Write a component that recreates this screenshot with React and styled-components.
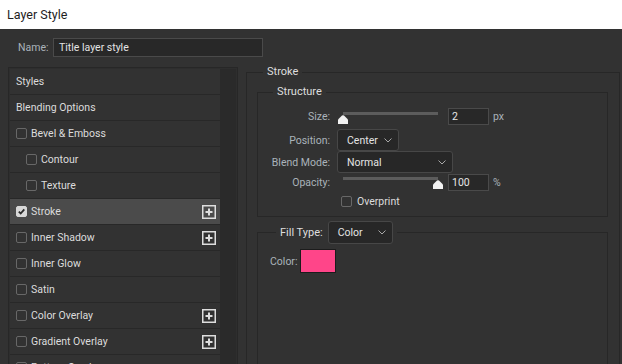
import styled, { createGlobalStyle } from 'styled-components';

const GlobalStyle = createGlobalStyle`
  html, body {
    margin: 0;
    height: 100%;
    overflow: hidden;
  }
  body {
    font-family: Roboto, "Liberation Sans", sans-serif;
    font-size: 10.5px;
    background: #323232;
  }
  #root {
    height: 100%;
  }
`;

const EFFECTS = [
  { label: 'Styles' },
  { label: 'Blending Options' },
  { label: 'Bevel & Emboss', check: true },
  { label: 'Contour', check: true, indent: true },
  { label: 'Texture', check: true, indent: true },
  { label: 'Stroke', check: true, checked: true, selected: true, plus: true },
  { label: 'Inner Shadow', check: true, plus: true },
  { label: 'Inner Glow', check: true },
  { label: 'Satin', check: true },
  { label: 'Color Overlay', check: true, plus: true },
  { label: 'Gradient Overlay', check: true, plus: true },
  { label: 'Pattern Overlay', check: true },
  { label: 'Outer Glow', check: true },
];

function App() {
  return (
    <Window>
      <GlobalStyle />
      <TitleBar>Layer Style</TitleBar>
      <Body>
        <NameRow>
          <NameLabel>Name:</NameLabel>
          <NameInput>Title layer style</NameInput>
        </NameRow>
        <Main>
          <EffectsPanel>
            <EffectsList>
              {EFFECTS.map((item) => (
                <EffectRow key={item.label} selected={item.selected} indent={item.indent}>
                  {item.check && <CheckBox checked={item.checked} />}
                  <EffectLabel>{item.label}</EffectLabel>
                  {item.plus && <PlusIcon />}
                </EffectRow>
              ))}
            </EffectsList>
            <Scrollbar />
          </EffectsPanel>

          <Group>
            <GroupLegend offset={6}>Stroke</GroupLegend>
            <SubGroup>
              <GroupLegend offset={15}>Structure</GroupLegend>
              <ControlRow height={17}>
                <RowLabel>Size:</RowLabel>
                <Slider value={0} />
                <NumberBox>2</NumberBox>
                <Unit>px</Unit>
              </ControlRow>
              <ControlRow height={22} gap={4}>
                <RowLabel>Position:</RowLabel>
                <Dropdown width={62}>Center</Dropdown>
              </ControlRow>
              <ControlRow height={22}>
                <RowLabel>Blend Mode:</RowLabel>
                <Dropdown width={116}>Normal</Dropdown>
              </ControlRow>
              <ControlRow height={18}>
                <RowLabel>Opacity:</RowLabel>
                <Slider value={1} />
                <NumberBox>100</NumberBox>
                <Unit>%</Unit>
              </ControlRow>
              <ControlRow height={14} gap={3}>
                <RowLabel />
                <CheckOption>
                  <CheckBox />
                  <OptionText>Overprint</OptionText>
                </CheckOption>
              </ControlRow>
            </SubGroup>

            <FillGroup>
              <FillLegend>
                <LegendText>Fill Type:</LegendText>
                <Dropdown width={65} height={23}>Color</Dropdown>
              </FillLegend>
              <ColorRow>
                <FieldLabel>Color:</FieldLabel>
                <Swatch color="#ff4589" />
              </ColorRow>
            </FillGroup>
          </Group>
        </Main>
      </Body>
    </Window>
  );
}

function CheckBox({ checked }) {
  return (
    <Box checked={checked}>
      {checked && (
        <svg width="9" height="9" viewBox="0 0 9 9">
          <path d="M1.8 4.6 L3.7 6.5 L7.3 2.4" fill="none" stroke="#2b2b2b" strokeWidth="1.8" />
        </svg>
      )}
    </Box>
  );
}

function PlusIcon() {
  return (
    <PlusWrap>
      <svg width="14" height="14" viewBox="0 0 14 14">
        <rect x="0.75" y="0.75" width="12.5" height="12.5" fill="none" stroke="#dedede" strokeWidth="1.5" />
        <path d="M7 3.5 V10.5 M3.5 7 H10.5" stroke="#dedede" strokeWidth="2" />
      </svg>
    </PlusWrap>
  );
}

function Slider({ value }) {
  return (
    <SliderWrap>
      <Track />
      <Thumb style={{ left: `${1 + value * 95}px` }}>
        <svg width="10" height="9" viewBox="0 0 10 9">
          <path d="M4 0.6 Q5 -0.2 6 0.6 L10 4.6 V9 H0 V4.6 Z" fill="#f2f2f2" />
        </svg>
      </Thumb>
    </SliderWrap>
  );
}

function Dropdown({ width, height = 22, children }) {
  return (
    <SelectBox width={width} height={height}>
      <span>{children}</span>
      <svg width="8" height="5" viewBox="0 0 8 5">
        <path d="M0.5 0.5 L4 4 L7.5 0.5" fill="none" stroke="#a8a8a8" strokeWidth="1" />
      </svg>
    </SelectBox>
  );
}

const Window = styled.div`
  display: flex;
  flex-direction: column;
  height: 100vh;
  overflow: hidden;
`;

const TitleBar = styled.div`
  flex: none;
  height: 29px;
  display: flex;
  align-items: center;
  padding-left: 7px;
  background: #ffffff;
  color: #1e1e1e;
  font-size: 12.5px;
`;

const Body = styled.div`
  flex: 1;
  min-height: 0;
  display: flex;
  flex-direction: column;
  padding: 9px 2px 0 8px;
  background: #323232;
  overflow: hidden;
`;

const NameRow = styled.div`
  display: flex;
  align-items: center;
  gap: 5px;
  padding-left: 10px;
  height: 19px;
`;

const FieldLabel = styled.span`
  color: #aab2ba;
`;

const NameLabel = styled(FieldLabel)`
  width: 30px;
`;

const NameInput = styled.div`
  box-sizing: border-box;
  width: 210px;
  height: 19px;
  display: flex;
  align-items: center;
  padding-left: 5px;
  background: #282828;
  border: 1px solid #4a4a4a;
  color: #e4e4e4;
`;

const Main = styled.div`
  flex: 1;
  min-height: 0;
  display: flex;
  align-items: flex-start;
  gap: 8px;
  margin-top: 8px;
`;

const EffectsPanel = styled.div`
  flex: none;
  box-sizing: border-box;
  width: 230px;
  margin-top: 2px;
  padding: 1px;
  height: 320px;
  display: flex;
  border: 1px solid #272727;
  background: #2e2e2e;
`;

const EffectsList = styled.div`
  width: 210px;
  display: flex;
  flex-direction: column;
`;

const EffectRow = styled.div`
  flex: none;
  box-sizing: border-box;
  height: 26px;
  display: flex;
  align-items: center;
  gap: 4px;
  padding-left: ${({ indent }) => (indent ? 16 : 6)}px;
  border-bottom: 1px solid #282828;
  background: ${({ selected }) => (selected ? '#4b4b4b' : '#323232')};
  color: #dcdcdc;
`;

const EffectLabel = styled.span`
  flex: 1;
`;

const PlusWrap = styled.span`
  display: flex;
  margin-right: 4px;
`;

const Scrollbar = styled.div`
  width: 16px;
  background: #2a2a2a;
`;

const Box = styled.span`
  flex: none;
  box-sizing: border-box;
  width: 11px;
  height: 11px;
  display: flex;
  align-items: center;
  justify-content: center;
  border-radius: 2px;
  border: 1px solid ${({ checked }) => (checked ? '#d8d8d8' : '#686868')};
  background: ${({ checked }) => (checked ? '#d8d8d8' : 'transparent')};
`;

const Group = styled.fieldset`
  flex: 1;
  min-width: 0;
  margin: 0;
  padding: 6px 11px 0 10px;
  border: 1px solid #272727;
  height: 400px;
`;

const GroupLegend = styled.legend`
  margin-left: ${({ offset }) => offset}px;
  padding: 0 4px;
  height: 14px;
  line-height: 14px;
  font-size: 11px;
  color: #dedede;
`;

const SubGroup = styled.fieldset`
  margin: 0;
  min-width: 0;
  padding: 9px 0 8px 0;
  border: 1px solid #272727;
  display: flex;
  flex-direction: column;
`;

const ControlRow = styled.div`
  display: flex;
  align-items: center;
  height: ${({ height }) => height}px;
  margin-top: ${({ gap = 0 }) => gap}px;
`;

const RowLabel = styled.span`
  flex: none;
  width: 72px;
  margin-right: 7px;
  text-align: right;
  color: #aab2ba;
`;

const SliderWrap = styled.div`
  position: relative;
  align-self: flex-start;
  width: 106px;
  height: 16px;
  margin-right: 5px;
`;

const Track = styled.div`
  position: absolute;
  top: 4px;
  left: 6px;
  width: 95px;
  height: 3px;
  background: #5c5c5c;
`;

const Thumb = styled.div`
  position: absolute;
  top: 7px;
  display: flex;
`;

const NumberBox = styled.div`
  box-sizing: border-box;
  width: 41px;
  height: 17px;
  display: flex;
  align-items: center;
  padding-left: 3px;
  background: #282828;
  border: 1px solid #4a4a4a;
  color: #e6e6e6;
`;

const Unit = styled.span`
  margin-left: 4px;
  color: #aab2ba;
`;

const SelectBox = styled.div`
  box-sizing: border-box;
  width: ${({ width }) => width}px;
  height: ${({ height }) => height}px;
  display: flex;
  align-items: center;
  justify-content: space-between;
  padding: 0 6px 0 9px;
  background: #272727;
  border: 1px solid #474747;
  border-radius: 3px;
  color: #e4e4e4;
`;

const CheckOption = styled.label`
  display: flex;
  align-items: center;
  gap: 5px;
  margin-left: 4px;
`;

const OptionText = styled.span`
  color: #dcdcdc;
`;

const FillGroup = styled.fieldset`
  margin: 4px 0 0 0;
  min-width: 0;
  padding: 5px 0 0 12px;
  border: 1px solid #272727;
  height: 200px;
`;

const FillLegend = styled.legend`
  display: flex;
  align-items: center;
  gap: 5px;
  margin-left: 6px;
  padding: 0 4px;
`;

const LegendText = styled.span`
  color: #dedede;
  font-size: 11px;
`;

const ColorRow = styled.div`
  display: flex;
  align-items: center;
  gap: 3px;
`;

const Swatch = styled.div`
  box-sizing: border-box;
  width: 36px;
  height: 24px;
  background: ${({ color }) => color};
  border: 1px solid #1c1c1c;
`;

export default App;
